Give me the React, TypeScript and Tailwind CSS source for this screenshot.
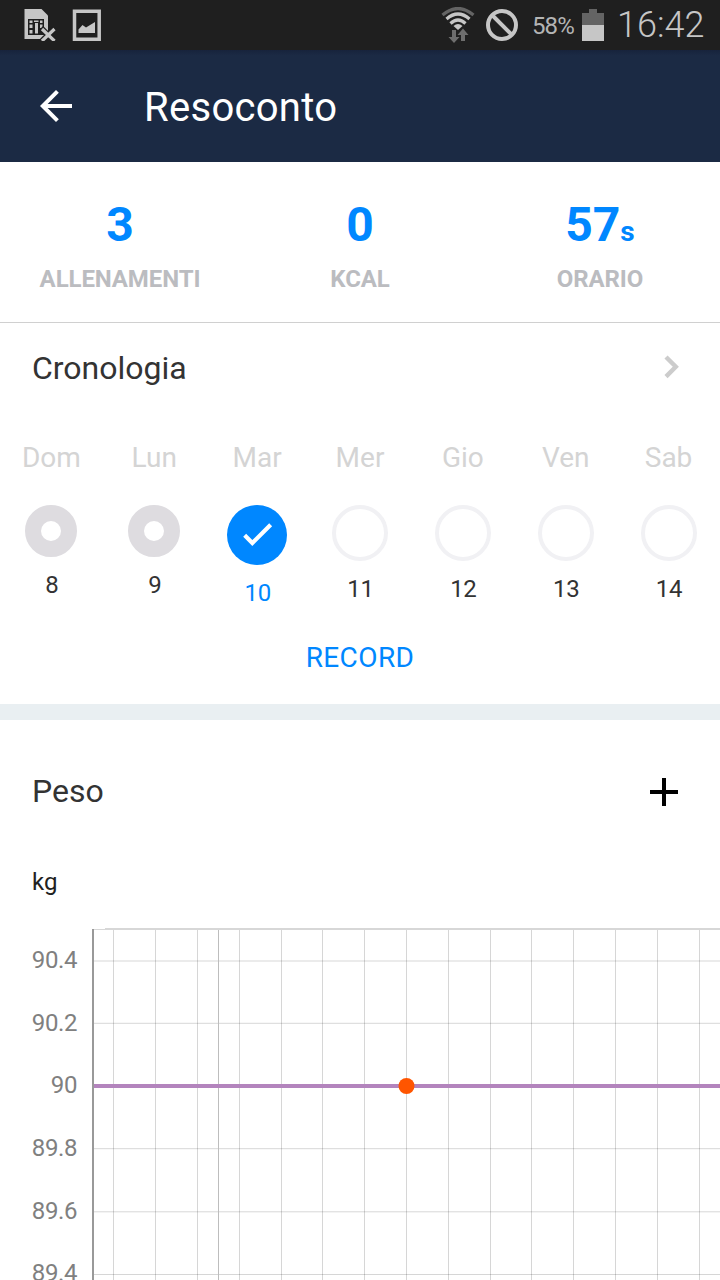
import clsx from "clsx";

type Day = {
  name: string;
  date: number;
  status: "past" | "today" | "future";
};

const days: Day[] = [
  { name: "Dom", date: 8, status: "past" },
  { name: "Lun", date: 9, status: "past" },
  { name: "Mar", date: 10, status: "today" },
  { name: "Mer", date: 11, status: "future" },
  { name: "Gio", date: 12, status: "future" },
  { name: "Ven", date: 13, status: "future" },
  { name: "Sab", date: 14, status: "future" },
];

const weights = ["90.4", "90.2", "90", "89.8", "89.6", "89.4"];

// x of the day lines and y of the weight lines, in chart units
const dayLines = [21, 63, 105, 147, 189, 230, 272, 314, 356, 398, 439, 481, 523, 565, 607];
const weightLines = [33, 95.3, 220.7, 283.8, 346.5];

const StatusBar = () => {
  return (
    <div className="flex h-[50px] shrink-0 items-center bg-[#1f1f1f] text-[#c6c6c6]">
      <svg className="ml-6 h-8 w-8" viewBox="0 0 32 32" fill="none">
        <path d="M0.5 0H17.5L24 6.5V30H0.5Z" fill="#c6c6c6" />
        <path d="M4 10H20V26H4Z" fill="#1f1f1f" />
        <path d="M5.5 11.5h3v2.500h-3zM10 11.500h4.500v1.500H10zM16 11.500h2.500v2.500H16zM5.500 15.500h3v3.500h-3zM16 15.500h2.500v3.500H16zM5.500 21h3v3.500h-3zM11 14h3v10.500h-3z" fill="#c6c6c6" />
        <path d="M17 19L31 33M31 19L17 33" stroke="#1f1f1f" strokeWidth="6" />
        <path d="M18 20L30.5 32M30.5 20L18 32" stroke="#c6c6c6" strokeWidth="3.2" />
      </svg>
      <svg className="ml-4 h-8 w-[30px]" viewBox="0 0 30 32" fill="none">
        <path d="M2.500 2.200H27.200V30.200H2.500Z" stroke="#c6c6c6" strokeWidth="3.500" />
        <path d="M6.500 24V20.500L10.500 16L14 18.500L23 13V24Z" fill="#c6c6c6" />
      </svg>
      <svg className="ml-[339px] h-[36px] w-[34px]" viewBox="0 0 34 36" fill="none">
        <path d="M1.500 8Q17 -5 32.500 8" stroke="#646464" strokeWidth="3.2" />
        <path d="M5.500 12Q17 2 28.500 12" stroke="#c6c6c6" strokeWidth="3.2" />
        <path d="M9.500 16.500Q17 9.500 24.500 16.500" stroke="#c6c6c6" strokeWidth="3.2" />
        <path d="M12.500 19Q17 15 21.500 19L17 23Z" fill="#c6c6c6" />
        <path d="M11 23h4v7h3.500L13 36 7.500 30H11ZM20 34V28h-3.500L22 21.500 27.500 28H24V34Z" fill="#6e6e6e" />
      </svg>
      <svg className="ml-[11px] h-8 w-8" viewBox="0 0 32 32" fill="none" stroke="#c6c6c6" strokeWidth="4">
        <circle cx="16" cy="16" r="14" />
        <path d="M6 6L26 26" />
      </svg>
      <span className="ml-[14px] mt-px w-[50px] text-2xl leading-none tracking-[-0.9px] text-[#b4b4b4]">58%</span>
      <svg className="h-8 w-[22px]" viewBox="0 0 22 32">
        <path d="M7 0H15V4H22V16H0V4H7Z" fill="#646464" />
        <path d="M0 16H22V32H0Z" fill="#c6c6c6" />
      </svg>
      <span className="ml-[13px] text-[36px] font-light leading-none">16:42</span>
    </div>
  );
};

const Stat = ({ value, unit, label }: { value: string; unit?: string; label: string }) => {
  return (
    <div className="flex flex-col items-center pt-[33px] font-bold">
      <p className="h-[60px] text-5xl leading-[60px] text-[#0087ff]">
        {value}
        {unit && <span className="text-[28px] leading-none">{unit}</span>}
      </p>
      <p className="mt-[11px] text-2xl leading-[26px] tracking-[-0.1px] text-[#bbbcc0]">{label}</p>
    </div>
  );
};

const DayItem = ({ day }: { day: Day }) => {
  return (
    <div className="flex flex-col items-center">
      <p className="text-[28px] leading-8 text-[#d4d4d4]">{day.name}</p>
      <div
        className={clsx(
          "mt-[31px] flex items-center justify-center rounded-full",
          day.status === "past" && "h-[52px] w-[52px] border-[16px] border-[#dedce0]",
          day.status === "today" && "h-[60px] w-[60px] bg-[#0087ff]",
          day.status === "future" && "h-14 w-14 border-4 border-[#f1f1f4]"
        )}
      >
        {day.status === "today" && (
          <svg className="h-10 w-10" viewBox="0 0 24 24" fill="none" stroke="white" strokeWidth="2.5">
            <path d="M4.600 12.200L9.200 16.800L20.200 5.800" />
          </svg>
        )}
      </div>
      <p
        className={clsx(
          "mt-3 pl-px text-2xl leading-8 tracking-[-0.3px]",
          day.status === "today" ? "text-[#0087ff]" : "text-[#333333]"
        )}
      >
        {day.date}
      </p>
    </div>
  );
};

const WeightChart = () => {
  return (
    <div className="flex h-[352px]">
      <div className="flex w-[92px] shrink-0 flex-col pr-[15px] text-right text-2xl tracking-[-0.4px] text-[#808080]">
        {weights.map((weight) => (
          <p key={weight} className="h-[62.7px] shrink-0 leading-[65px]">{weight}</p>
        ))}
      </div>
      <svg className="h-[352px] w-[628px]" viewBox="0 0 628 352" fill="none">
        {dayLines.map((x) => (
          <path key={x} d={`M${x + 0.5} 2V352`} stroke="#000" strokeOpacity="0.16" />
        ))}
        {weightLines.map((y) => (
          <path key={y} d={`M2 ${y}H628`} stroke="#000" strokeOpacity="0.16" />
        ))}
        <path d="M126.500 1V352" stroke="#bdbdbd" />
        <path d="M2 1.500H13" stroke="#d7d7d7" />
        <path d="M13 1H628" stroke="#d7d7d7" strokeWidth="2" />
        <path d="M1 1V352" stroke="#999999" strokeWidth="2" />
        <path d="M2 158H628" stroke="#b384bd" strokeWidth="4" />
        <circle cx="314.500" cy="158" r="8" fill="#ff5500" />
      </svg>
    </div>
  );
};

export default function App() {
  return (
    <div className="flex h-[1280px] w-[720px] flex-col overflow-hidden bg-white font-[Roboto,sans-serif]">
      <StatusBar />

      <header className="flex h-28 shrink-0 items-center bg-[#1b2a44] bg-linear-to-b from-[#17233c] to-[#1b2a44] to-5% pl-8 text-white">
        <svg className="h-12 w-12" viewBox="0 0 24 24" fill="currentColor">
          <path d="M20 11H7.830l5.590-5.590L12 4l-8 8 8 8 1.410-1.410L7.830 13H20v-2z" />
        </svg>
        <h1 className="ml-[64px] mt-1 text-[40px] leading-none tracking-[0.3px]">Resoconto</h1>
      </header>

      <section className="grid h-[161px] shrink-0 grid-cols-3 border-b border-[#d0d0d0]">
        <Stat value="3" label="ALLENAMENTI" />
        <Stat value="0" label="KCAL" />
        <Stat value="57" unit="s" label="ORARIO" />
      </section>

      <section className="h-[381px] shrink-0">
        <div className="flex h-[89px] items-center justify-between pl-8 pr-[26px]">
          <h2 className="text-[32px] text-[#333333]">Cronologia</h2>
          <svg className="mb-0.5 h-[46px] w-[46px]" viewBox="0 0 24 24" fill="none" stroke="#cccccc" strokeWidth="2.3">
            <path d="M9.400 6.800L14.500 11.900L9.400 17" />
          </svg>
        </div>
        <div className="grid grid-cols-7 pt-[30px]">
          {days.map((day) => (
            <DayItem key={day.date} day={day} />
          ))}
        </div>
        <button className="mt-[33px] block w-full text-[28px] leading-8 tracking-[0.4px] text-[#0087ff]">RECORD</button>
      </section>

      <div className="h-4 shrink-0 bg-[#e9eff2]" />

      <section className="shrink-0">
        <div className="flex h-36 items-center justify-between pl-8 pr-8">
          <h2 className="mb-0.5 text-[32px] text-[#333333]">Peso</h2>
          <svg className="h-12 w-12" viewBox="0 0 24 24" fill="black">
            <path d="M19 13h-6v6h-2v-6H5v-2h6V5h2v6h6v2z" />
          </svg>
        </div>
        <p className="h-16 pl-8 text-2xl leading-9 text-[#212121]">kg</p>
        <WeightChart />
      </section>
    </div>
  );
}
